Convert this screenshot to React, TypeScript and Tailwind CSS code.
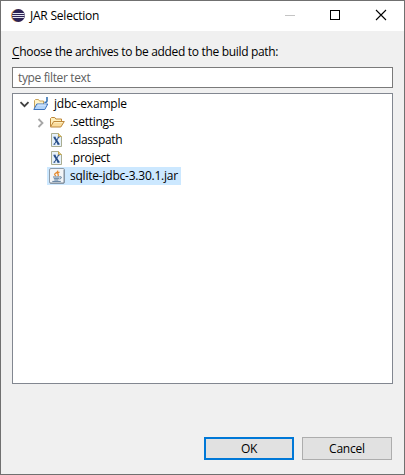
import type { ReactNode } from "react";

function EclipseIcon() {
  return (
    <svg width="16" height="16" viewBox="0 0 16 16">
      <circle cx="7.2" cy="7.5" r="6.3" fill="#f3a04a" />
      <circle cx="8.4" cy="7.5" r="6.5" fill="#2c2255" />
      <path d="M2.6 5.5h11.6M2.2 7.5h12.4M2.6 9.5h11.6" stroke="#e4e4f0" strokeWidth="1" />
    </svg>
  );
}

function ProjectIcon() {
  return (
    <svg width="16" height="16" viewBox="0 0 16 16">
      <path d="M1.5 12.5v-8l1-1h3l1 1.5h4v3" fill="#fff3c8" stroke="#c9a45c" />
      <path d="M.8 13.5l3-5.5h11l-3 5.5z" fill="#b4d5fa" stroke="#3f74bd" strokeLinejoin="round" />
      <path d="M4.5 9h8.6" stroke="#e3f0ff" />
      <path d="M14 1v3.8q0 1.9-2.6 1.4" fill="none" stroke="#3572b4" strokeWidth="1.6" />
    </svg>
  );
}

function FolderIcon() {
  return (
    <svg width="16" height="16" viewBox="0 0 16 16">
      <path d="M1.5 12.5v-8l1-1h3.3l1 1.5h5.7v3" fill="#fff0bd" stroke="#bd873b" strokeLinejoin="round" />
      <path d="M1.5 13l3.2-5.5h10.6L11.8 13z" fill="#f9dc9d" stroke="#bd873b" strokeLinejoin="round" />
      <path d="M5.3 8.5h8.4" stroke="#fff0c2" />
    </svg>
  );
}

function XFileIcon() {
  return (
    <svg width="16" height="16" viewBox="0 0 16 16">
      <path d="M2.5 1.5h7l3 3v10h-10z" fill="#e6f1fb" stroke="#a9ad91" />
      <path d="M9.5 1.5v3h3" fill="#f0d27b" stroke="#c8a84e" />
      <path d="M5.3 5.2l4.4 7" stroke="#244b86" strokeWidth="2" />
      <path d="M9.6 5.2L5.4 12.2M4.5 5.2h2M8.6 5.2h1.9M4.5 12.2h1.8M8.5 12.2h2.1" stroke="#244b86" strokeWidth="1" />
    </svg>
  );
}

function JarIcon() {
  return (
    <svg width="16" height="16" viewBox="0 0 16 16">
      <rect x=".5" y=".5" width="15" height="15" rx="1.5" fill="#f3f5f7" stroke="#8f9ca9" />
      <path d="M1 14.9h14M14.9 2v13" stroke="#78899a" strokeWidth=".8" />
      <path d="M8.5 2.6Q9.2 4 6.8 5.2T7 8M10.5 4.2Q8.1 5 9 6.3T8.6 8" fill="none" stroke="#e58b30" strokeWidth="1.3" />
      <path d="M4 9h6.5M4.8 10.7h5.2M5.3 12h4M3.3 13.4h8.5" stroke="#5b7c9c" />
      <path d="M10.5 8.8q2.4-.3 1.8 1t-2 1.2" fill="none" stroke="#5b7c9c" />
    </svg>
  );
}

function ChevronDown() {
  return (
    <svg width="11" height="7" viewBox="0 0 11 7">
      <path d="M1.5 1.2l4 4 4-4" fill="none" stroke="#404040" strokeWidth="1.8" />
    </svg>
  );
}

function ChevronRight() {
  return (
    <svg width="7" height="11" viewBox="0 0 7 11">
      <path d="M1.5 2l4 4-4 4" fill="none" stroke="#a6a6a6" strokeWidth="1.8" />
    </svg>
  );
}

function TreeRow({ icon, toggle, root, selected, children }: {
  icon: ReactNode;
  toggle?: ReactNode;
  root?: boolean;
  selected?: boolean;
  children: ReactNode;
}) {
  return (
    <div className={`flex h-[18px] items-center ${root ? "pl-1" : "pl-5"}`}>
      <div className="flex w-[14px] shrink-0 items-center justify-center">{toggle}</div>
      <div className={`flex h-full items-center ${selected ? "bg-[#cce8ff]" : ""}`}>
        <div className="w-[21px] shrink-0 pl-0.5">{icon}</div>
        <div className="whitespace-nowrap pr-[3px] pl-0.5">{children}</div>
      </div>
    </div>
  );
}

export default function App() {
  return (
    <div className="flex h-[475px] w-[405px] flex-col border border-[#707070] bg-[#f0f0f0] font-['Open_Sans','Noto_Sans',sans-serif] text-[12px] leading-[18px] text-black">
      <header className="flex h-[30px] shrink-0 items-center bg-white pl-[9px]">
        <EclipseIcon />
        <h1 className="ml-1 grow whitespace-nowrap tracking-[-0.22px]">JAR Selection</h1>
        <svg width="120" height="30" viewBox="0 0 120 30" fill="none">
          <path d="M1 14.5h10" stroke="#c4c4c4" />
          <rect x="46.5" y="9.5" width="9" height="9" stroke="#000" />
          <path d="M92 9l10 10M102 9L92 19" stroke="#000" strokeWidth="1.1" />
        </svg>
      </header>
      <main className="flex grow flex-col px-[11px]">
        <label className="mt-3 h-[18px] whitespace-nowrap tracking-[-0.32px]">
          <span className="underline underline-offset-2">C</span>hoose the archives to be added to the build path:
        </label>
        <div className="mt-1.5 flex h-[21px] shrink-0 items-center border border-[#7a7a7a] bg-white pl-[5px] tracking-[-0.36px] text-[#606060]">
          type filter text
        </div>
        <div className="mt-[5px] h-[291px] shrink-0 border border-[#828790] bg-white pt-px">
          <TreeRow root icon={<ProjectIcon />} toggle={<ChevronDown />}><span className="tracking-[-0.2px]">jdbc-example</span></TreeRow>
          <TreeRow icon={<FolderIcon />} toggle={<ChevronRight />}><span className="tracking-[-0.3px]">.settings</span></TreeRow>
          <TreeRow icon={<XFileIcon />}><span className="tracking-[-0.35px]">.classpath</span></TreeRow>
          <TreeRow icon={<XFileIcon />}><span className="tracking-[-0.3px]">.project</span></TreeRow>
          <TreeRow selected icon={<JarIcon />}><span className="tracking-[-0.22px]">sqlite-jdbc-3.30.1.jar</span></TreeRow>
        </div>
        <div className="mt-[53px] mr-px flex justify-end gap-2">
          <button className="h-[23px] w-[90px] border-2 border-[#0078d7] bg-[#e1e1e1] leading-[19px] tracking-[-0.3px]">OK</button>
          <button className="h-[23px] w-[90px] border border-[#adadad] bg-[#e1e1e1] leading-[21px] tracking-[-0.2px]">Cancel</button>
        </div>
      </main>
    </div>
  );
}
